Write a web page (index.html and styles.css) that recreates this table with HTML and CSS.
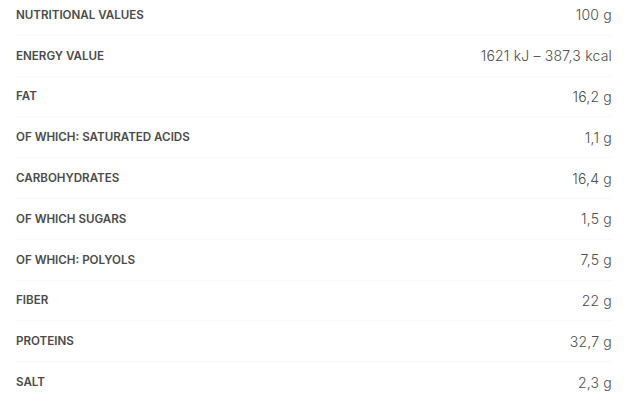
FILE: index.html
```html
<!DOCTYPE html>
<html>
<head>
<meta charset="utf-8">
<link rel="stylesheet" href="styles.css">
</head>
<body>
<div class="table">
  <div class="row"><span class="label">Nutritional values</span><span class="value">100 g</span></div>
  <div class="row"><span class="label">Energy value</span><span class="value">1621 kJ – 387,3 kcal</span></div>
  <div class="row"><span class="label">Fat</span><span class="value">16,2 g</span></div>
  <div class="row"><span class="label">of which: saturated acids</span><span class="value">1,1 g</span></div>
  <div class="row"><span class="label">Carbohydrates</span><span class="value">16,4 g</span></div>
  <div class="row"><span class="label">of which sugars</span><span class="value">1,5 g</span></div>
  <div class="row"><span class="label">of which: polyols</span><span class="value">7,5 g</span></div>
  <div class="row"><span class="label">Fiber</span><span class="value">22 g</span></div>
  <div class="row"><span class="label">Proteins</span><span class="value">32,7 g</span></div>
  <div class="row"><span class="label">Salt</span><span class="value">2,3 g</span></div>
</div>
</body>
</html>
```
FILE: styles.css
```css
html, body {
  margin: 0;
  padding: 0;
  background: #ffffff;
}
body {
  font-family: "Inter", "Open Sans", sans-serif;
}
.table {
  margin: -5px 21px 0 16px;
}
.row {
  height: 40.8px;
  display: flex;
  align-items: center;
  justify-content: space-between;
  border-bottom: 1px solid #f9f9f9;
  box-sizing: border-box;
}
.label {
  text-transform: uppercase;
  font-size: 11.6px;
  font-weight: 600;
  color: #4a4a4a;
  letter-spacing: 0;
}
.value {
  font-size: 14px;
  font-weight: 300;
  color: #4d4d4d;
  letter-spacing: 0.2px;
}
```
